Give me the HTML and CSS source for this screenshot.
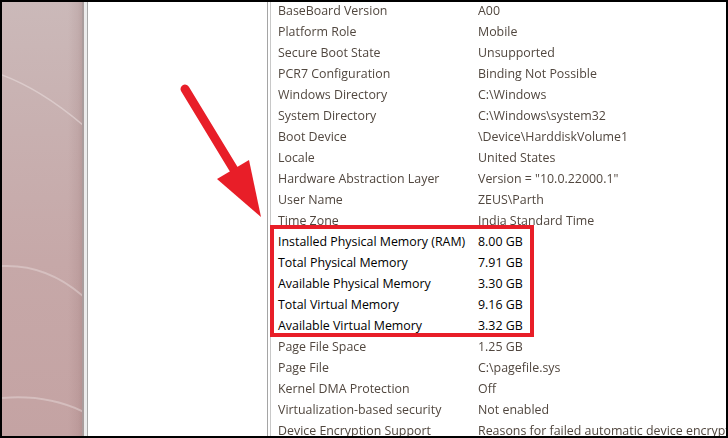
FILE: index.html
```html
<!DOCTYPE html>
<html lang="en">
<head>
<meta charset="utf-8">
<title>System Information</title>
<link rel="stylesheet" href="styles.css">
</head>
<body>
<div class="frame">
  <div class="desktop">
    <svg class="arcs" width="80" height="434" viewBox="0 0 80 434">
      <path d="M0 73 Q40 88 82 124" fill="none" stroke="#eadede" stroke-opacity="0.55" stroke-width="1.5"/>
      <path d="M0 264 Q45 262 82 295" fill="none" stroke="#e6d8d8" stroke-opacity="0.5" stroke-width="2"/>
      <path d="M0 396 Q45 392 82 410" fill="none" stroke="#e6d8d8" stroke-opacity="0.5" stroke-width="2"/>
    </svg>
  </div>
  <div class="divider"></div>
  <div class="sidebar"></div>
  <div class="list">
    <div class="row dim"><span class="name">BaseBoard Version</span><span class="value">A00</span></div>
    <div class="row dim"><span class="name">Platform Role</span><span class="value">Mobile</span></div>
    <div class="row dim"><span class="name">Secure Boot State</span><span class="value">Unsupported</span></div>
    <div class="row dim"><span class="name">PCR7 Configuration</span><span class="value">Binding Not Possible</span></div>
    <div class="row dim"><span class="name">Windows Directory</span><span class="value">C:\Windows</span></div>
    <div class="row dim"><span class="name">System Directory</span><span class="value">C:\Windows\system32</span></div>
    <div class="row dim"><span class="name">Boot Device</span><span class="value">\Device\HarddiskVolume1</span></div>
    <div class="row dim"><span class="name">Locale</span><span class="value">United States</span></div>
    <div class="row dim"><span class="name">Hardware Abstraction Layer</span><span class="value">Version = "10.0.22000.1"</span></div>
    <div class="row dim"><span class="name">User Name</span><span class="value">ZEUS\Parth</span></div>
    <div class="row dim"><span class="name">Time Zone</span><span class="value">India Standard Time</span></div>
    <div class="row sharp"><span class="name">Installed Physical Memory (RAM)</span><span class="value">8.00 GB</span></div>
    <div class="row sharp"><span class="name">Total Physical Memory</span><span class="value">7.91 GB</span></div>
    <div class="row sharp"><span class="name">Available Physical Memory</span><span class="value">3.30 GB</span></div>
    <div class="row sharp"><span class="name">Total Virtual Memory</span><span class="value">9.16 GB</span></div>
    <div class="row sharp"><span class="name">Available Virtual Memory</span><span class="value">3.32 GB</span></div>
    <div class="row dim"><span class="name">Page File Space</span><span class="value">1.25 GB</span></div>
    <div class="row dim"><span class="name">Page File</span><span class="value">C:\pagefile.sys</span></div>
    <div class="row dim"><span class="name">Kernel DMA Protection</span><span class="value">Off</span></div>
    <div class="row dim"><span class="name">Virtualization-based security</span><span class="value">Not enabled</span></div>
    <div class="row dim"><span class="name">Device Encryption Support</span><span class="value">Reasons for failed automatic device encryption: TPM is not usable</span></div>
  </div>
  <div class="highlight"></div>
  <svg class="arrow" width="728" height="438" viewBox="0 0 728 438">
    <line x1="185" y1="89" x2="236" y2="173" stroke="#e81e28" stroke-width="9" stroke-linecap="round"/>
    <polygon points="217,179 249,160 261,217" fill="#e81e28"/>
  </svg>
</div>
</body>
</html>
```
FILE: styles.css
```css
html, body {
  margin: 0;
  padding: 0;
  background: #ffffff;
}

.frame {
  position: relative;
  width: 728px;
  height: 438px;
  box-sizing: border-box;
  border: 2px solid #000000;
  display: flex;
  overflow: hidden;
  background: #ffffff;
}

.desktop {
  width: 80px;
  flex: none;
  background:
    linear-gradient(90deg, rgba(0,0,0,0) 0, rgba(0,0,0,0) 66px, rgba(120,80,80,0.10) 76px, rgba(110,70,70,0.18) 80px),
    linear-gradient(180deg, #cbb9b9 0%, #c8b0b0 30%, #c6a8a8 60%, #c4a3a3 100%);
}

.arcs {
  display: block;
}

.divider {
  width: 6px;
  flex: none;
  box-sizing: border-box;
  background: #ececec;
  border-left: 2px solid #a99c9c;
  border-right: 1px solid #a8a8a8;
}

.sidebar {
  width: 179px;
  flex: none;
  background: #ffffff;
  border-right: 1px solid #a5a5a5;
}

.list {
  flex: 1;
  min-width: 0;
  margin-left: 2px;
  border-left: 1px solid #c8c8c8;
  padding-left: 7px;
  margin-top: -2px;
  overflow: hidden;
  font-family: "Open Sans", "Noto Sans", sans-serif;
  font-size: 12.4px;
}

.row {
  display: flex;
  height: 21px;
  line-height: 21px;
  white-space: nowrap;
}

.name {
  width: 200px;
  flex: none;
}

.value {
  flex: none;
}

.dim {
  color: #51473f;
  filter: blur(0.35px);
}

.sharp {
  color: #000000;
}

.highlight {
  position: absolute;
  left: 268px;
  top: 223px;
  width: 264px;
  height: 112px;
  box-sizing: border-box;
  border: 4px solid #e81e28;
}

.arrow {
  position: absolute;
  left: -2px;
  top: -2px;
  pointer-events: none;
}
```
